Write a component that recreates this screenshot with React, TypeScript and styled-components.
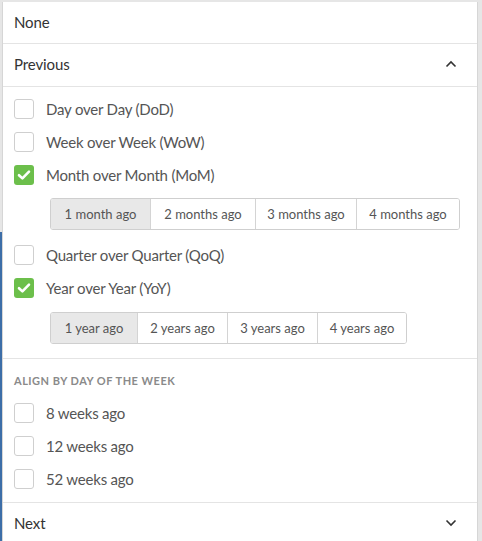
import React, { useState } from "react";
import styled, { createGlobalStyle } from "styled-components";

const Global = createGlobalStyle`
  html, body { margin: 0; padding: 0; }
  body {
    background: linear-gradient(to bottom, #e6e6e6 0, #e6e6e6 232px, #3d6ea8 232px) left top / 2px 100% no-repeat, #e6e6e6;
    font-family: Lato, "Open Sans", sans-serif;
    -webkit-font-smoothing: antialiased;
  }
`;

const Panel = styled.div`
  margin: 2px 4px 0 2px;
  background: #fff;
  border-left: 1px solid #d6d6d6;
  border-right: 1px solid #d6d6d6;
  height: 539px;
  overflow: hidden;
  box-sizing: border-box;
`;

const HeaderRow = styled.div<{ $h?: number }>`
  height: ${(p) => p.$h ?? 42}px;
  box-sizing: border-box;
  display: flex;
  align-items: center;
  justify-content: space-between;
  padding: 0 20px 2px 11px;
  border-bottom: 1px solid #e4e4e4;
  font-size: 15px;
  letter-spacing: -0.1px;
  color: #333;
`;

const Section = styled.div<{ $pt: number; $pb: number }>`
  padding: ${(p) => p.$pt}px 0 ${(p) => p.$pb}px 11px;
  border-bottom: 1px solid #e4e4e4;
  display: flex;
  flex-direction: column;
`;

const CheckRow = styled.label`
  height: 33px;
  display: flex;
  align-items: center;
  gap: 12px;
  font-size: 15px;
  letter-spacing: -0.2px;
  color: #555;
  cursor: pointer;
`;

const Box = styled.span<{ $checked: boolean }>`
  width: 20px;
  height: 20px;
  box-sizing: border-box;
  border-radius: 3px;
  border: ${(p) => (p.$checked ? "none" : "1.5px solid #cfcfcf")};
  background: ${(p) => (p.$checked ? "#6cbf4b" : "#fff")};
  display: flex;
  align-items: center;
  justify-content: center;
  flex: none;
`;

const Group = styled.div<{ $mt: number; $mb?: number }>`
  display: inline-flex;
  align-self: flex-start;
  margin: ${(p) => p.$mt}px 0 ${(p) => p.$mb ?? 0}px 36px;
  border: 1px solid #cfcfcf;
  border-radius: 3px;
  overflow: hidden;
`;

const SegButton = styled.button<{ $active: boolean; $w: number }>`
  width: ${(p) => p.$w}px;
  height: 30px;
  border: none;
  border-left: 1px solid #d4d4d4;
  &:first-child { border-left: none; }
  background: ${(p) => (p.$active ? "#e8e8e8" : "#fff")};
  font-family: Lato, "Open Sans", sans-serif;
  font-size: 13px;
  color: #555;
  padding: 0;
  cursor: pointer;
`;

const Heading = styled.div`
  font-size: 11px;
  font-weight: 700;
  letter-spacing: 0.5px;
  color: #8a8a8a;
  text-transform: uppercase;
  height: 16px;
  line-height: 16px;
  margin-bottom: 7px;
`;

const Check = () => (
  <svg width="14" height="12" viewBox="0 0 14 12">
    <path d="M2 6.2 L5.4 9.4 L12 2.6" fill="none" stroke="#fff" strokeWidth="2.6" strokeLinecap="round" strokeLinejoin="round" />
  </svg>
);

const Chevron = ({ up }: { up: boolean }) => (
  <svg width="12" height="8" viewBox="0 0 12 8">
    <path d={up ? "M1.5 6.5 L6 2 L10.5 6.5" : "M1.5 1.5 L6 6 L10.5 1.5"} fill="none" stroke="#333" strokeWidth="1.6" />
  </svg>
);

const CheckItem = ({ label, checked }: { label: string; checked?: boolean }) => (
  <CheckRow>
    <Box $checked={!!checked}>{checked && <Check />}</Box>
    {label}
  </CheckRow>
);

export default function App() {
  const [month, setMonth] = useState(0);
  const [year, setYear] = useState(0);
  const months = [
    ["1 month ago", 99],
    ["2 months ago", 105],
    ["3 months ago", 101],
    ["4 months ago", 103],
  ] as const;
  const years = [
    ["1 year ago", 86],
    ["2 years ago", 90],
    ["3 years ago", 90],
    ["4 years ago", 89],
  ] as const;
  return (
    <>
      <Global />
      <Panel>
        <HeaderRow $h={42}>None</HeaderRow>
        <HeaderRow $h={43}>
          Previous
          <Chevron up />
        </HeaderRow>
        <Section $pt={5} $pb={14}>
          <CheckItem label="Day over Day (DoD)" />
          <CheckItem label="Week over Week (WoW)" />
          <CheckItem label="Month over Month (MoM)" checked />
          <Group $mt={7} $mb={8}>
            {months.map(([t, w], i) => (
              <SegButton key={t} $w={w} $active={i === month} onClick={() => setMonth(i)}>
                {t}
              </SegButton>
            ))}
          </Group>
          <CheckItem label="Quarter over Quarter (QoQ)" />
          <CheckItem label="Year over Year (YoY)" checked />
          <Group $mt={8}>
            {years.map(([t, w], i) => (
              <SegButton key={t} $w={w} $active={i === year} onClick={() => setYear(i)}>
                {t}
              </SegButton>
            ))}
          </Group>
        </Section>
        <Section $pt={14} $pb={7}>
          <Heading>Align by day of the week</Heading>
          <CheckItem label="8 weeks ago" />
          <CheckItem label="12 weeks ago" />
          <CheckItem label="52 weeks ago" />
        </Section>
        <HeaderRow>
          Next
          <Chevron up={false} />
        </HeaderRow>
      </Panel>
    </>
  );
}
